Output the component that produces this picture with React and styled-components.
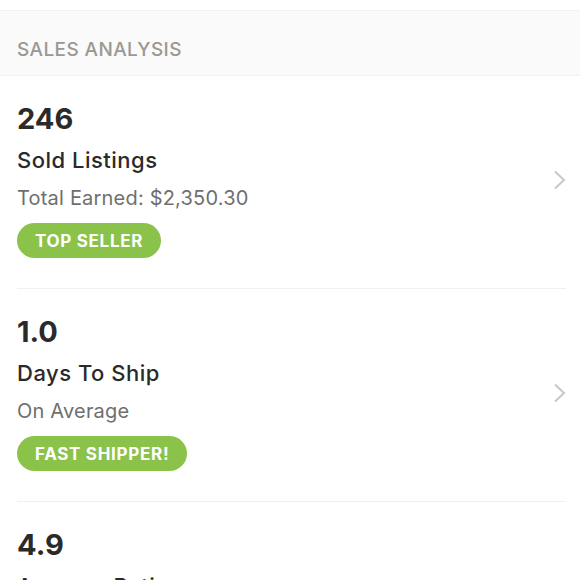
import React from 'react'
import styled, { createGlobalStyle } from 'styled-components'

const GlobalStyle = createGlobalStyle`
  body {
    margin: 0;
    background: #fff;
    font-family: Inter, 'Noto Sans', sans-serif;
  }
`

const stats = [
  { value: '246', title: 'Sold Listings', note: 'Total Earned: $2,350.30', badge: 'TOP SELLER' },
  { value: '1.0', title: 'Days To Ship', note: 'On Average', badge: 'FAST SHIPPER!' },
  { value: '4.9', title: 'Average Rating', note: 'From Buyers', badge: 'LOVED' },
]

const Page = styled.div`
  padding-top: 10px;
`

const Header = styled.div`
  height: 66px;
  box-sizing: border-box;
  display: flex;
  align-items: center;
  padding: 12px 0 0 17px;
  background: #fafafa;
  border-top: 1px solid #f2f2f2;
  border-bottom: 1px solid #f2f2f2;
  color: #9b9892;
  font-size: 19px;
  font-weight: 500;
  letter-spacing: 0.4px;
`

const Row = styled.div`
  display: flex;
  align-items: center;
  margin: 0 14px 0 17px;
  padding: 26px 0 30px;
  border-bottom: 1px solid #f0f0f0;
`

const Info = styled.div`
  flex: 1;
  display: flex;
  flex-direction: column;
  align-items: flex-start;
`

const Value = styled.div`
  font-size: 29px;
  font-weight: 700;
  line-height: 34px;
  color: #2a2a2a;
`

const Title = styled.div`
  margin-top: 10px;
  font-size: 22px;
  font-weight: 500;
  line-height: 28px;
  letter-spacing: 0.5px;
  color: #2a2a2a;
`

const Note = styled.div`
  margin-top: 11px;
  font-size: 20px;
  line-height: 26px;
  letter-spacing: 0.2px;
  color: #6f6f6f;
`

const Badge = styled.span`
  margin-top: 12px;
  height: 35px;
  display: inline-flex;
  align-items: center;
  padding: 0 18px;
  border-radius: 18px;
  background: #8bc34a;
  color: #fff;
  font-size: 17px;
  font-weight: 700;
  letter-spacing: 0.7px;
`

const Chevron = () => (
  <svg width="14" height="20" viewBox="0 0 14 20">
    <path d="M3 1.5 L12 10 L3 18.5" fill="none" stroke="#c8c8c8" strokeWidth="2" />
  </svg>
)

export default function App() {
  return (
    <Page>
      <GlobalStyle />
      <Header>SALES ANALYSIS</Header>
      {stats.map((s) => (
        <Row key={s.title}>
          <Info>
            <Value>{s.value}</Value>
            <Title>{s.title}</Title>
            <Note>{s.note}</Note>
            <Badge>{s.badge}</Badge>
          </Info>
          <Chevron />
        </Row>
      ))}
    </Page>
  )
}
